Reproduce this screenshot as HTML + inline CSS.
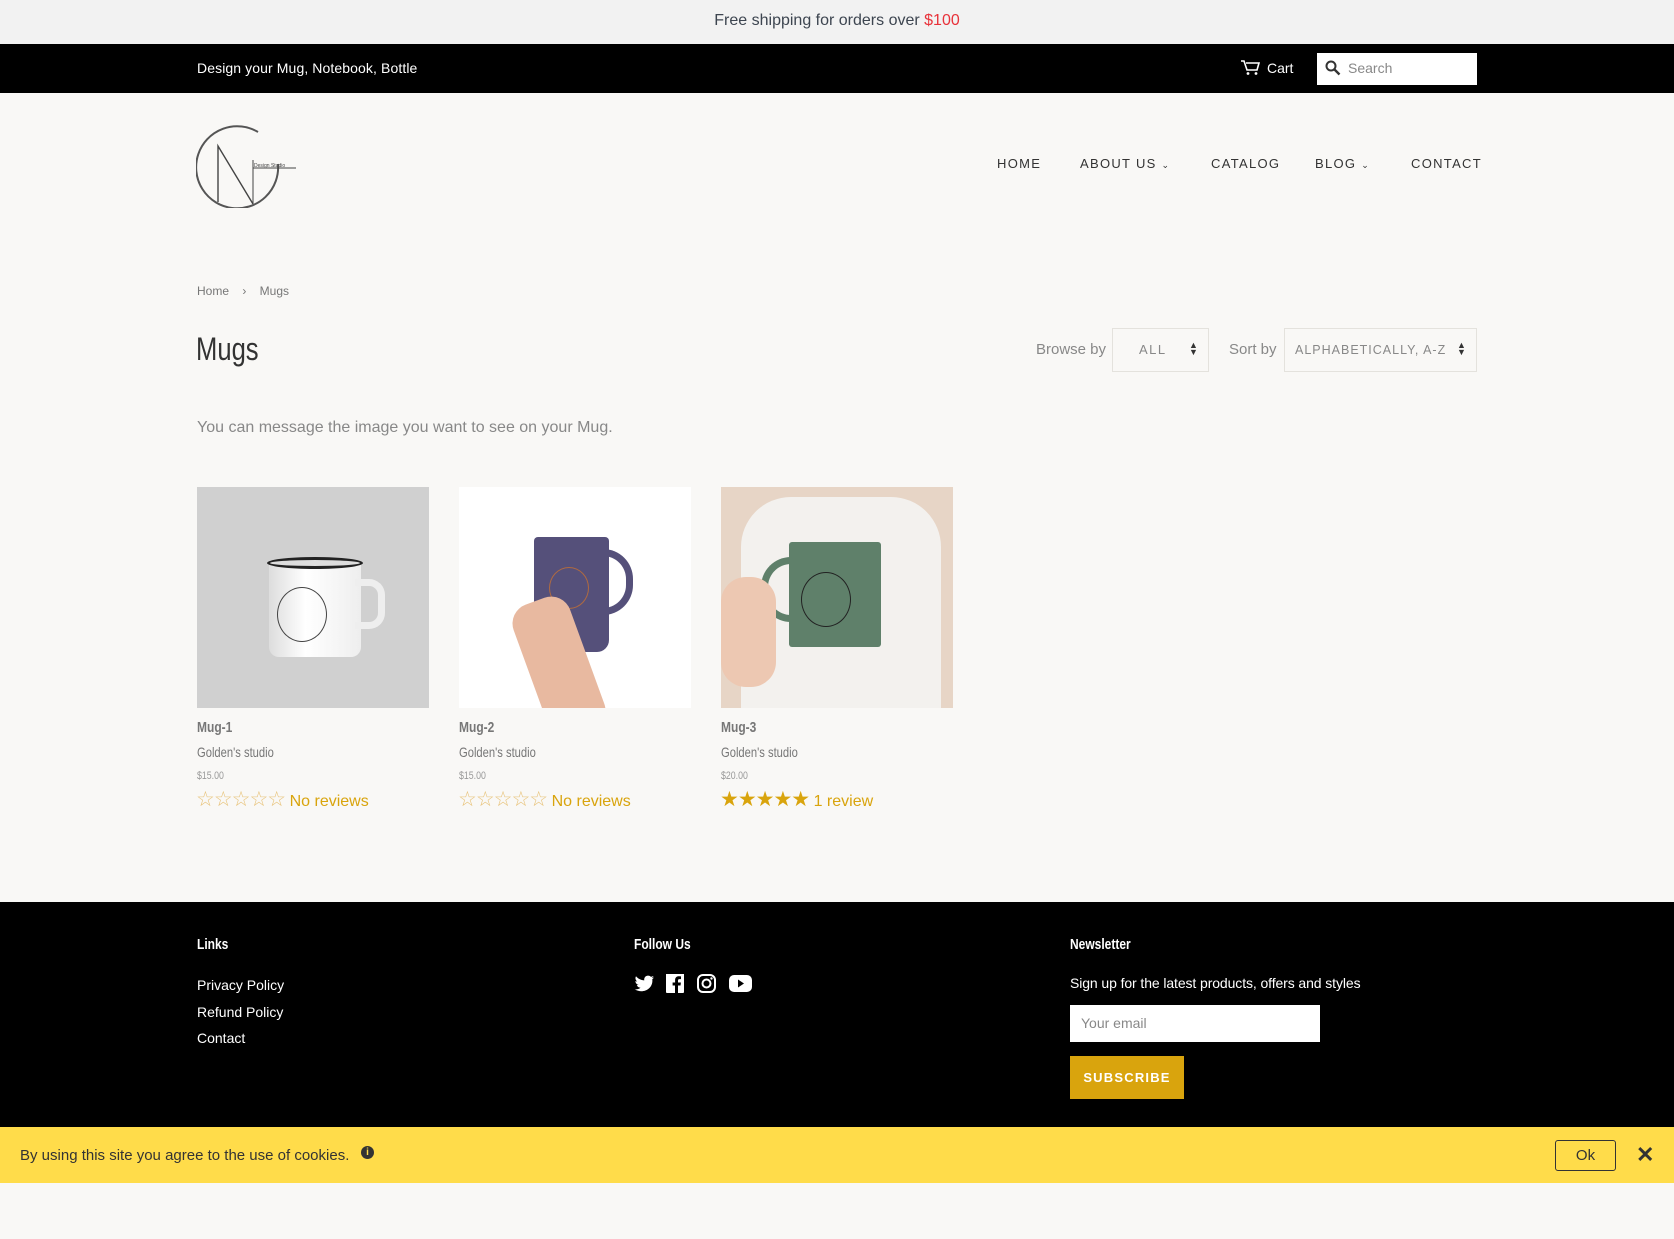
<!DOCTYPE html>
<html><head><meta charset="utf-8"><style>
*{margin:0;padding:0;box-sizing:border-box}
body{width:1674px;height:1239px;background:#f9f8f6;font-family:"Liberation Sans",sans-serif;position:relative;overflow:hidden;color:#333}
.a{position:absolute;white-space:nowrap}
.n{transform:scaleX(.8);transform-origin:left top}
</style></head><body>
<div class="a" style="left:0;top:0;width:1674px;height:44px;background:#f2f2f2"></div>
<div class="a" style="left:0;top:12px;width:1674px;text-align:center;font-size:16px;color:#3d4550">Free shipping for orders over <span style="color:#e8323a">$100</span></div>
<div class="a" style="left:0;top:44px;width:1674px;height:49px;background:#000"></div>
<div class="a" style="left:197px;top:60px;color:#fff;font-size:14px;letter-spacing:.1px">Design your Mug, Notebook, Bottle</div>
<svg class="a" style="left:1240px;top:59px" width="20" height="17" viewBox="0 0 20 17"><path d="M1 2h3l3 9h10l2-7H6" fill="none" stroke="#fff" stroke-width="1.6"/><circle cx="8" cy="14.5" r="1.4" fill="#fff"/><circle cx="16" cy="14.5" r="1.4" fill="#fff"/></svg>
<div class="a" style="left:1267px;top:60px;color:#fff;font-size:14px">Cart</div>
<div class="a" style="left:1317px;top:53px;width:160px;height:32px;background:#fff"></div>
<svg class="a" style="left:1325px;top:60px" width="16" height="16" viewBox="0 0 16 16"><circle cx="6" cy="6" r="4.5" fill="none" stroke="#333" stroke-width="2"/><path d="M9.5 9.5l5 5" stroke="#333" stroke-width="2.4"/></svg>
<div class="a" style="left:1348px;top:60px;color:#888;font-size:14px">Search</div>
<svg class="a" style="left:196px;top:122px" width="104" height="86" viewBox="0 0 104 86"><path d="M62 10A41 41 0 1 0 82 42" fill="none" stroke="#555" stroke-width="2"/><path d="M22 80V24L57 82" fill="none" stroke="#444" stroke-width="1.4"/><path d="M57 38V82M57 46H100" stroke="#444" stroke-width="1"/><text x="58" y="45" font-size="5" fill="#444" font-family="Liberation Sans">Design Studio</text></svg>
<div class="a" style="left:997px;top:156px;font-size:13px;letter-spacing:1.3px;color:#333">HOME</div>
<div class="a" style="left:1080px;top:156px;font-size:13px;letter-spacing:1.3px;color:#333">ABOUT US <span style="font-size:9px">&#8964;</span></div>
<div class="a" style="left:1211px;top:156px;font-size:13px;letter-spacing:1.3px;color:#333">CATALOG</div>
<div class="a" style="left:1315px;top:156px;font-size:13px;letter-spacing:1.3px;color:#333">BLOG <span style="font-size:9px">&#8964;</span></div>
<div class="a" style="left:1411px;top:156px;font-size:13px;letter-spacing:1.3px;color:#333">CONTACT</div>
<div class="a" style="left:197px;top:284px;font-size:12px;color:#777">Home &nbsp; &nbsp;› &nbsp; &nbsp;Mugs</div>
<div class="a n" style="left:196px;top:331px;font-size:32px;color:#333">Mugs</div>
<div class="a" style="left:1036px;top:341px;font-size:15px;color:#888">Browse by</div>
<div class="a" style="left:1112px;top:328px;width:97px;height:44px;border:1px solid #e4e2dd"></div>
<div class="a" style="left:1139px;top:342px;font-size:13px;letter-spacing:1.5px;color:#888">ALL</div>
<div class="a" style="left:1189px;top:342px;font-size:9px;line-height:7px;color:#333">▲<br>▼</div>
<div class="a" style="left:1229px;top:341px;font-size:15px;color:#888">Sort by</div>
<div class="a" style="left:1284px;top:328px;width:193px;height:44px;border:1px solid #e4e2dd"></div>
<div class="a" style="left:1295px;top:343px;font-size:12.5px;letter-spacing:1px;color:#888">ALPHABETICALLY, A-Z</div>
<div class="a" style="left:1457px;top:342px;font-size:9px;line-height:7px;color:#333">▲<br>▼</div>
<div class="a" style="left:197px;top:419px;font-size:16px;color:#888">You can message the image you want to see on your Mug.</div>

<div class="a" style="left:197px;top:487px;width:232px;height:221px;background:#d0d0d0;overflow:hidden">
<div class="a" style="left:72px;top:75px;width:92px;height:95px;background:linear-gradient(90deg,#ddd,#fff 40%,#eee);border-radius:3px 3px 10px 10px"></div>
<div class="a" style="left:70px;top:70px;width:96px;height:12px;border:3px solid #222;border-radius:50%;background:#ddd"></div>
<div class="a" style="left:158px;top:92px;width:30px;height:50px;border:7px solid #eee;border-left:none;border-radius:0 16px 16px 0"></div>
<div class="a" style="left:80px;top:100px;width:50px;height:55px;border:1px solid #444;border-radius:50%"></div>
</div>
<div class="a" style="left:459px;top:487px;width:232px;height:221px;background:#fff;overflow:hidden">
<div class="a" style="left:75px;top:50px;width:75px;height:115px;background:#55507a;border-radius:4px 4px 12px 12px"></div>
<div class="a" style="left:140px;top:62px;width:34px;height:66px;border:7px solid #55507a;border-left:none;border-radius:0 30px 30px 0"></div>
<div class="a" style="left:90px;top:80px;width:40px;height:42px;border:1px solid #b06a40;border-radius:50%"></div>
<div class="a" style="left:70px;top:110px;width:60px;height:140px;background:#e8b9a0;transform:rotate(-20deg);border-radius:20px"></div>
</div>
<div class="a" style="left:721px;top:487px;width:232px;height:221px;background:#e7d5c6;overflow:hidden">
<div class="a" style="left:20px;top:10px;width:200px;height:230px;background:#f3f1ee;border-radius:50px 50px 0 0"></div>
<div class="a" style="left:68px;top:55px;width:92px;height:105px;background:#5f806a;border-radius:3px"></div>
<div class="a" style="left:40px;top:70px;width:34px;height:65px;border:7px solid #5f806a;border-right:none;border-radius:30px 0 0 30px"></div>
<div class="a" style="left:80px;top:85px;width:50px;height:55px;border:1px solid #222;border-radius:50%"></div>
<div class="a" style="left:0px;top:90px;width:55px;height:110px;background:#edc8b2;border-radius:25px"></div>
</div>

<div class="a n" style="left:197px;top:719px;font-size:15px;font-weight:bold;color:#777">Mug-1</div>
<div class="a n" style="left:197px;top:744px;font-size:14px;color:#777">Golden's studio</div>
<div class="a n" style="left:197px;top:770px;font-size:11px;color:#999">$15.00</div>
<div class="a" style="left:196px;top:787px;font-size:21px;color:#e8c37a;letter-spacing:-1px">☆☆☆☆☆<span style="font-size:16px;color:#d9a40d;letter-spacing:0"> No reviews</span></div>
<div class="a n" style="left:459px;top:719px;font-size:15px;font-weight:bold;color:#777">Mug-2</div>
<div class="a n" style="left:459px;top:744px;font-size:14px;color:#777">Golden's studio</div>
<div class="a n" style="left:459px;top:770px;font-size:11px;color:#999">$15.00</div>
<div class="a" style="left:458px;top:787px;font-size:21px;color:#e8c37a;letter-spacing:-1px">☆☆☆☆☆<span style="font-size:16px;color:#d9a40d;letter-spacing:0"> No reviews</span></div>
<div class="a n" style="left:721px;top:719px;font-size:15px;font-weight:bold;color:#777">Mug-3</div>
<div class="a n" style="left:721px;top:744px;font-size:14px;color:#777">Golden's studio</div>
<div class="a n" style="left:721px;top:770px;font-size:11px;color:#999">$20.00</div>
<div class="a" style="left:720px;top:787px;font-size:21px;color:#d9a40d;letter-spacing:-1px">★★★★★<span style="font-size:16px;letter-spacing:0"> 1 review</span></div>

<div class="a" style="left:0;top:902px;width:1674px;height:225px;background:#000"></div>
<div class="a n" style="left:197px;top:936px;color:#fff;font-size:15px;font-weight:bold">Links</div>
<div class="a" style="left:197px;top:972px;color:#fff;font-size:14px;line-height:26.5px">Privacy Policy<br>Refund Policy<br>Contact</div>
<div class="a n" style="left:634px;top:936px;color:#fff;font-size:15px;font-weight:bold">Follow Us</div>
<svg class="a" style="left:634px;top:973px" width="120" height="22" viewBox="0 0 120 22">
<path d="M20 4.5c-.7.3-1.5.5-2.3.6.8-.5 1.5-1.3 1.8-2.2-.8.5-1.7.8-2.6 1-1.6-1.7-4.4-1.6-5.9.2-.7.9-1 2.1-.7 3.3C7 7.2 4 5.6 2 3.2.9 5 1.5 7.3 3.2 8.5c-.6 0-1.2-.2-1.8-.5 0 1.9 1.3 3.5 3.2 3.9-.6.2-1.2.2-1.8.1.5 1.600 2 2.7 3.7 2.8C5 16 2.9 16.6.8 16.4c7.9 4.8 18.7-.2 17.5-10.3.7-.5 1.3-1 1.7-1.6z" fill="#fff"/>
<path d="M32 1h18v18c0 .6-.4 1-1 1h-5v-7.5h2.5l.4-3H44V7.6c0-.9.3-1.5 1.5-1.5H47V3.4c-.3 0-1.2-.1-2.2-.1-2.2 0-3.7 1.3-3.7 3.8v2.4H38.6v3H41V20h-8c-.6 0-1-.4-1-1z" fill="#fff"/>
<rect x="64" y="2" width="17" height="17" rx="5" fill="none" stroke="#fff" stroke-width="2"/><circle cx="72.5" cy="10.5" r="4" fill="none" stroke="#fff" stroke-width="2"/><circle cx="77.5" cy="5.5" r="1.2" fill="#fff"/>
<rect x="95" y="2" width="23" height="17" rx="5" fill="#fff"/><path d="M104 6.5v8l6-4z" fill="#000"/></svg>
<div class="a n" style="left:1070px;top:936px;color:#fff;font-size:15px;font-weight:bold">Newsletter</div>
<div class="a" style="left:1070px;top:975px;color:#fff;font-size:14px;letter-spacing:-.1px">Sign up for the latest products, offers and styles</div>
<div class="a" style="left:1070px;top:1005px;width:250px;height:37px;background:#fff"></div>
<div class="a" style="left:1081px;top:1015px;color:#888;font-size:14px">Your email</div>
<div class="a" style="left:1070px;top:1056px;width:114px;height:43px;background:#d9a40d;color:#fff;font-size:13px;letter-spacing:1.2px;text-align:center;line-height:43px;font-weight:bold">SUBSCRIBE</div>

<div class="a" style="left:0;top:1127px;width:1674px;height:56px;background:#ffdc4a"></div>
<div class="a" style="left:20px;top:1147px;font-size:15px;color:#333">By using this site you agree to the use of cookies.</div>
<div class="a" style="left:361px;top:1146px;width:13px;height:13px;border-radius:50%;background:#333;color:#ffdc4a;font-size:10px;font-weight:bold;text-align:center;line-height:13px">i</div>
<div class="a" style="left:1555px;top:1140px;width:61px;height:31px;border:1px solid #333;border-radius:3px;text-align:center;line-height:29px;font-size:15px;color:#333">Ok</div>
<div class="a" style="left:1636px;top:1142px;font-size:22px;font-weight:bold;color:#333">✕</div>
</body></html>
